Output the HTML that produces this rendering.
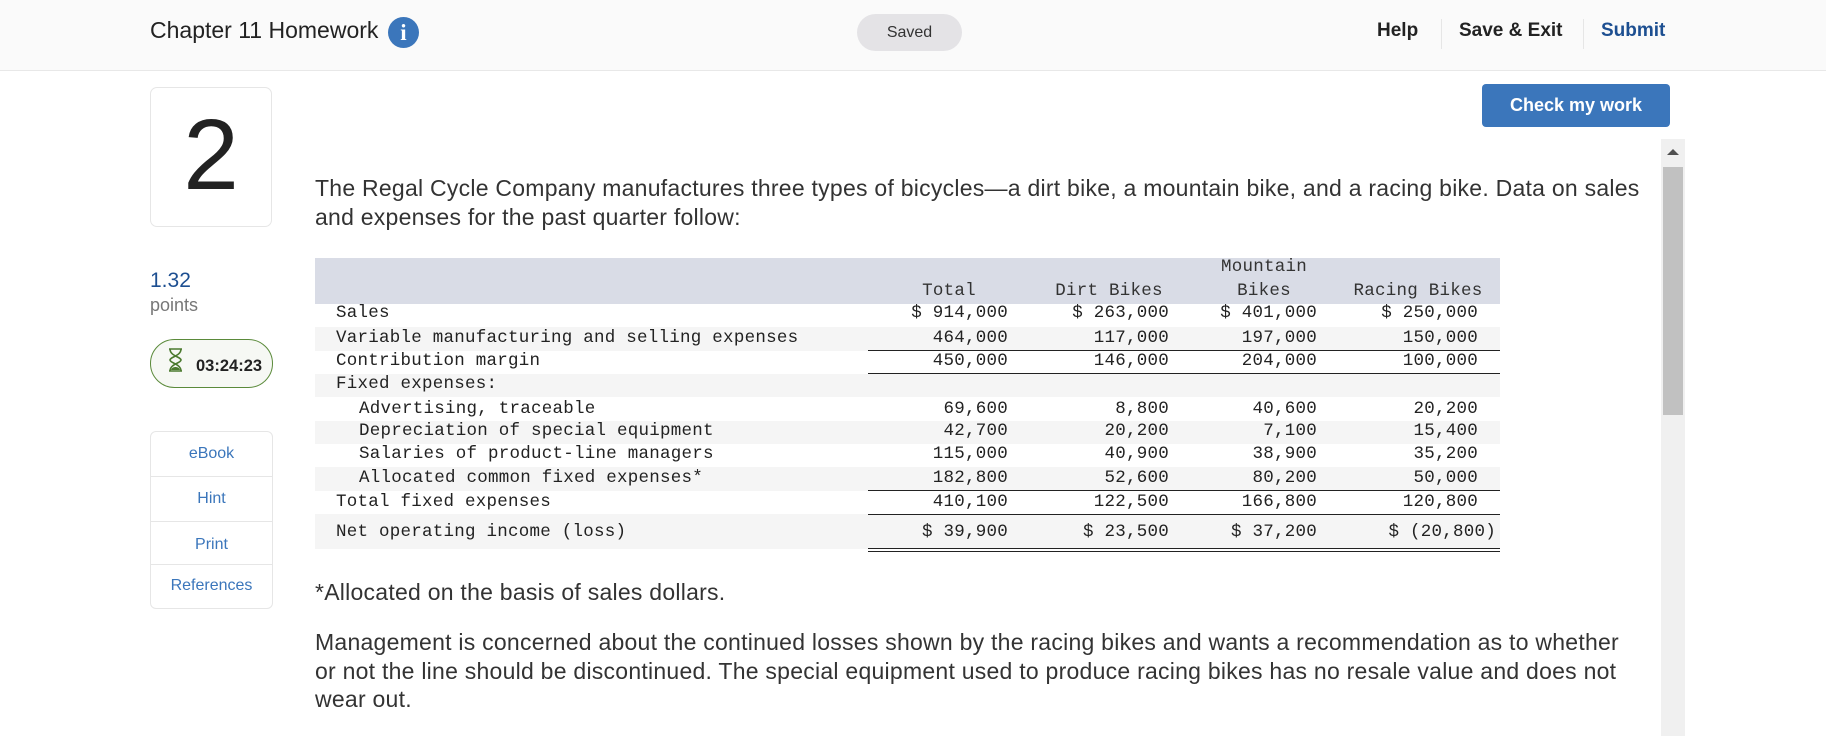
<!DOCTYPE html>
<html><head><meta charset="utf-8"><style>
*{margin:0;padding:0;box-sizing:border-box}
body{width:1826px;height:736px;overflow:hidden;background:#fff;font-family:"Liberation Sans",sans-serif;color:#333;position:relative}
.a{position:absolute}
.hdr{left:0;top:0;width:1826px;height:71px;background:#fafafa;border-bottom:1px solid #e8e8e8}
.mono{font-family:"Liberation Mono",monospace;font-size:17.5px;letter-spacing:0.25px;color:#222;white-space:pre}
.row{position:absolute;left:315px;width:1185px}
.g{background:#f5f5f5}
.n{position:absolute;text-align:right;width:160px}
.p{font-size:23px;color:#333;white-space:nowrap;letter-spacing:0.25px}
.side{left:150px;width:123px;border:1px solid #e6e6e6;text-align:center;color:#3b76bb;font-size:16px}
.hl{position:absolute;left:868px;width:632px;height:1px;background:#222}
</style></head><body>
<div class="a hdr"></div>
<div class="a" style="left:150px;top:17px;font-size:23px;color:#222">Chapter 11 Homework</div>
<div class="a" style="left:388px;top:17px;width:31px;height:31px;border-radius:50%;background:#3b76bb;color:#fff;font-family:'Liberation Serif',serif;font-weight:bold;font-size:23px;text-align:center;line-height:31px">i</div>
<div class="a" style="left:857px;top:14px;width:105px;height:37px;border-radius:19px;background:#e4e3e6;font-size:16px;color:#333;text-align:center;line-height:37px">Saved</div>
<div class="a" style="left:1377px;top:20px;font-size:19px;font-weight:bold;color:#222">Help</div>
<div class="a" style="left:1441px;top:19px;width:1px;height:30px;background:#e6e6e6"></div>
<div class="a" style="left:1459px;top:20px;font-size:19px;font-weight:bold;color:#222">Save &amp; Exit</div>
<div class="a" style="left:1583px;top:19px;width:1px;height:30px;background:#e6e6e6"></div>
<div class="a" style="left:1601px;top:20px;font-size:19px;font-weight:bold;color:#1d4f91">Submit</div>

<div class="a" style="left:1482px;top:84px;width:188px;height:43px;border-radius:4px;background:#3b76bb;color:#fff;font-weight:bold;font-size:18px;text-align:center;line-height:43px">Check my work</div>

<div class="a" style="left:1661px;top:139px;width:24px;height:597px;background:#f0f0f0"></div>
<div class="a" style="left:1667px;top:149px;width:0;height:0;border-left:6px solid transparent;border-right:6px solid transparent;border-bottom:6px solid #505050"></div>
<div class="a" style="left:1663px;top:167px;width:20px;height:248px;background:#c1c1c1"></div>

<div class="a" style="left:150px;top:87px;width:122px;height:140px;border:1px solid #e6e6e6;border-radius:7px"></div>
<div class="a" style="left:150px;top:95px;width:122px;text-align:center;font-size:100px;line-height:120px;color:#222">2</div>
<div class="a" style="left:150px;top:269px;font-size:21px;color:#1d4f91">1.32</div>
<div class="a" style="left:150px;top:295px;font-size:18px;color:#777">points</div>
<div class="a" style="left:150px;top:339px;width:123px;height:49px;border:1.5px solid #5a8a3a;border-radius:25px;background:#f6f8f4"></div>
<svg class="a" style="left:166px;top:347px" width="19" height="26" viewBox="0 0 19 26"><path d="M3 2h13M3 24h13M4 2c0 7 11 8 11 11S4 17 4 24M15 2c0 7-11 8-11 11s11 4 11 11" fill="none" stroke="#4b7a2e" stroke-width="1.6"/><path d="M5 23c1-4 8-4 9 0z" fill="#4b7a2e"/></svg>
<div class="a" style="left:196px;top:357px;font-size:16.5px;font-weight:bold;color:#222">03:24:23</div>

<div class="a side" style="top:431px;height:46px;line-height:44px;border-radius:6px 6px 0 0">eBook</div>
<div class="a side" style="top:476px;height:46px;line-height:44px">Hint</div>
<div class="a side" style="top:521px;height:44px;line-height:46px">Print</div>
<div class="a side" style="top:564px;height:45px;line-height:42px;border-radius:0 0 6px 6px">References</div>

<div class="a p" style="left:315px;top:175px">The Regal Cycle Company manufactures three types of bicycles—a dirt bike, a mountain bike, and a racing bike. Data on sales</div>
<div class="a p" style="left:315px;top:204px">and expenses for the past quarter follow:</div>

<div class="row" style="top:258px;height:46px;background:#d9dce6"></div>
<div class="row g" style="top:327px;height:24px"></div>
<div class="row g" style="top:374px;height:23px"></div>
<div class="row g" style="top:421px;height:23px"></div>
<div class="row g" style="top:467px;height:24px"></div>
<div class="row g" style="top:514px;height:35px"></div>

<div class="hl" style="top:350px"></div>
<div class="hl" style="top:373px"></div>
<div class="hl" style="top:490px"></div>
<div class="hl" style="top:514px"></div>
<div class="hl" style="top:548px"></div>
<div class="hl" style="top:551px"></div>

<div class="a mono" style="left:0;top:0;width:1826px;height:736px">
<span class="a" style="left:1204px;top:257px;width:120px;text-align:center;color:#333">Mountain</span>
<span class="a" style="left:899px;top:281px;width:100px;text-align:center;color:#333">Total</span>
<span class="a" style="left:1039px;top:281px;width:140px;text-align:center;color:#333">Dirt Bikes</span>
<span class="a" style="left:1204px;top:281px;width:120px;text-align:center;color:#333">Bikes</span>
<span class="a" style="left:1343px;top:281px;width:150px;text-align:center;color:#333">Racing Bikes</span>

<span class="a" style="left:336px;top:303px">Sales</span>
<span class="a" style="left:336px;top:328px">Variable manufacturing and selling expenses</span>
<span class="a" style="left:336px;top:351px">Contribution margin</span>
<span class="a" style="left:336px;top:374px">Fixed expenses:</span>
<span class="a" style="left:359px;top:399px">Advertising, traceable</span>
<span class="a" style="left:359px;top:421px">Depreciation of special equipment</span>
<span class="a" style="left:359px;top:444px">Salaries of product-line managers</span>
<span class="a" style="left:359px;top:468px">Allocated common fixed expenses*</span>
<span class="a" style="left:336px;top:492px">Total fixed expenses</span>
<span class="a" style="left:336px;top:522px">Net operating income (loss)</span>

<span class="n" style="left:848px;top:303px">$ 914,000</span><span class="n" style="left:1009px;top:303px">$ 263,000</span><span class="n" style="left:1157px;top:303px">$ 401,000</span><span class="n" style="left:1318px;top:303px">$ 250,000</span>
<span class="n" style="left:848px;top:328px">464,000</span><span class="n" style="left:1009px;top:328px">117,000</span><span class="n" style="left:1157px;top:328px">197,000</span><span class="n" style="left:1318px;top:328px">150,000</span>
<span class="n" style="left:848px;top:351px">450,000</span><span class="n" style="left:1009px;top:351px">146,000</span><span class="n" style="left:1157px;top:351px">204,000</span><span class="n" style="left:1318px;top:351px">100,000</span>
<span class="n" style="left:848px;top:399px">69,600</span><span class="n" style="left:1009px;top:399px">8,800</span><span class="n" style="left:1157px;top:399px">40,600</span><span class="n" style="left:1318px;top:399px">20,200</span>
<span class="n" style="left:848px;top:421px">42,700</span><span class="n" style="left:1009px;top:421px">20,200</span><span class="n" style="left:1157px;top:421px">7,100</span><span class="n" style="left:1318px;top:421px">15,400</span>
<span class="n" style="left:848px;top:444px">115,000</span><span class="n" style="left:1009px;top:444px">40,900</span><span class="n" style="left:1157px;top:444px">38,900</span><span class="n" style="left:1318px;top:444px">35,200</span>
<span class="n" style="left:848px;top:468px">182,800</span><span class="n" style="left:1009px;top:468px">52,600</span><span class="n" style="left:1157px;top:468px">80,200</span><span class="n" style="left:1318px;top:468px">50,000</span>
<span class="n" style="left:848px;top:492px">410,100</span><span class="n" style="left:1009px;top:492px">122,500</span><span class="n" style="left:1157px;top:492px">166,800</span><span class="n" style="left:1318px;top:492px">120,800</span>
<span class="n" style="left:848px;top:522px">$ 39,900</span><span class="n" style="left:1009px;top:522px">$ 23,500</span><span class="n" style="left:1157px;top:522px">$ 37,200</span><span class="n" style="left:1336px;top:522px">$ (20,800)</span>
</div>

<div class="a p" style="left:315px;top:579px">*Allocated on the basis of sales dollars.</div>
<div class="a p" style="left:315px;top:629px">Management is concerned about the continued losses shown by the racing bikes and wants a recommendation as to whether</div>
<div class="a p" style="left:315px;top:658px">or not the line should be discontinued. The special equipment used to produce racing bikes has no resale value and does not</div>
<div class="a p" style="left:315px;top:686px">wear out.</div>
</body></html>
